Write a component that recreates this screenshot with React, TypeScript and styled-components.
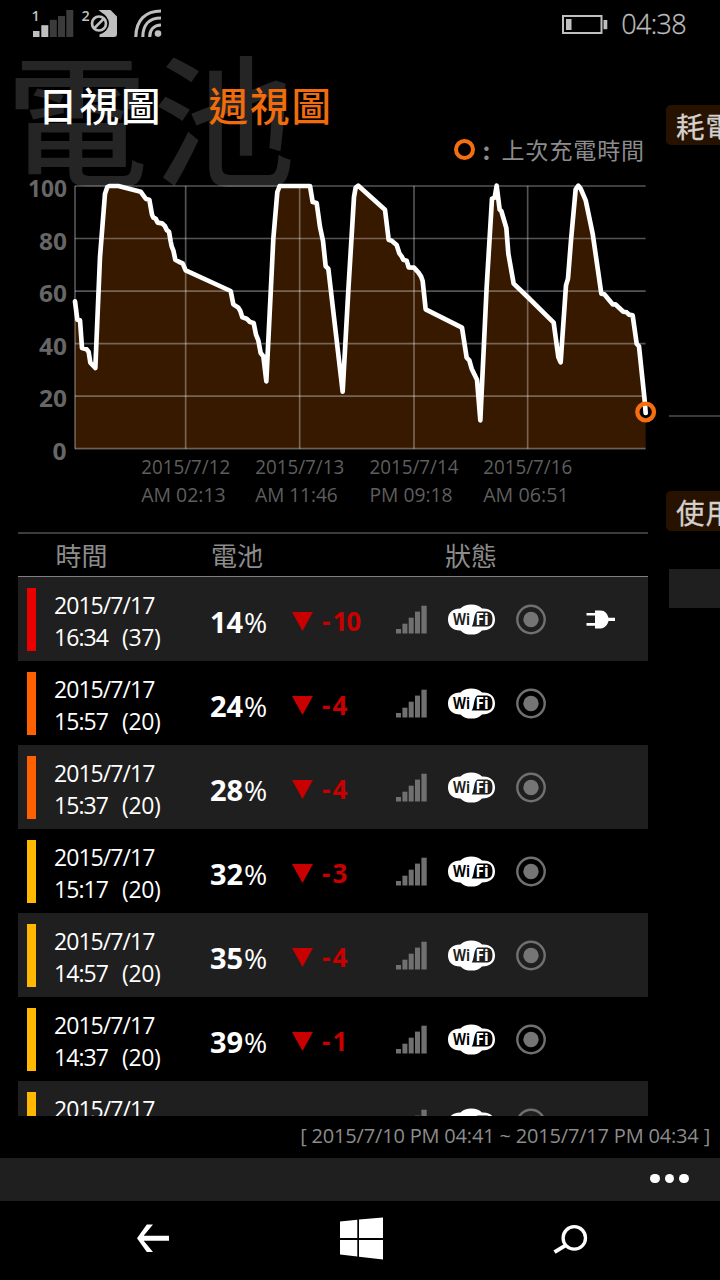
import React from "react";
import styled, { createGlobalStyle } from "styled-components";

const latin = `"Open Sans", "Noto Sans", "Noto Sans CJK TC", sans-serif`;
const cjk = `"Noto Sans CJK TC", "Open Sans", sans-serif`;

const GlobalStyle = createGlobalStyle`
  * { box-sizing: border-box; }
  html, body { margin: 0; background: #000; }
  body { font-family: ${latin}; color: #fff; overflow: hidden; }
  svg { display: block; flex: none; overflow: visible; }
`;

const Phone = styled.div`
  width: 720px;
  height: 1280px;
  display: flex;
  flex-direction: column;
  overflow: hidden;
  background: #000;
`;

const StatusBar = styled.header`
  height: 50px;
  flex: none;
  display: flex;
  align-items: flex-start;
  padding: 9px 34px 0 32px;
`;

const StatusRight = styled.div`
  margin-left: auto;
  display: flex;
  align-items: flex-start;
  gap: 12px;
`;

const Clock = styled.span`
  font-size: 27px;
  line-height: 30px;
  font-weight: 300;
  letter-spacing: -0.65px;
  color: #bfbfbf;
  -webkit-text-stroke: 0.3px #bfbfbf;
`;

const Panorama = styled.div`
  height: 1108px;
  flex: none;
  display: flex;
  position: relative;
  overflow: hidden;
`;

const Backdrop = styled.div`
  position: absolute;
  left: 6px;
  top: -18px;
  font-family: ${cjk};
  font-size: 142px;
  font-weight: 500;
  line-height: 164px;
  letter-spacing: 5px;
  white-space: nowrap;
  color: #252525;
`;

const MainPane = styled.main`
  position: relative;
  width: 648px;
  flex: none;
  display: flex;
  flex-direction: column;
  padding-left: 18px;
`;

const Tabs = styled.nav`
  height: 82px;
  flex: none;
  display: flex;
  gap: 46px;
  padding: 25px 0 0 20px;
`;

const Tab = styled.span<{ $active?: boolean }>`
  font-family: ${cjk};
  font-size: 39.5px;
  line-height: 57px;
  letter-spacing: 2px;
  font-weight: 500;
  color: ${(p) => (p.$active ? "#fff" : "#f06c0c")};
`;

const Legend = styled.div`
  height: 36px;
  flex: none;
  display: flex;
  align-items: center;
  justify-content: flex-end;
  padding: 0 3px 2px 0;
  font-family: ${cjk};
  font-size: 23px;
  letter-spacing: 0.9px;
  color: #8c8c8c;
`;

const LegendRing = styled.i`
  width: 21px;
  height: 21px;
  margin-top: 1px;
  border: 4.5px solid #f56e0f;
  border-radius: 50%;
`;

const Colon = styled.b`
  width: 26px;
  padding-left: 8px;
  margin-right: 1px;
  font-size: 24px;
`;

const HeaderRow = styled.div`
  height: 45px;
  margin-top: 14px;
  flex: none;
  display: grid;
  grid-template-columns: 155.5px 234px 1fr;
  align-items: center;
  padding-left: 37.5px;
  border-top: 2px solid #3c3c3c;
  border-bottom: 1px solid #808080;
  font-family: ${cjk};
  font-size: 26px;
  line-height: 40px;
  color: #8c8c8c;
`;

const List = styled.div`
  flex: 1;
  min-height: 0;
  overflow: hidden;
`;

const Row = styled.div<{ $shade: boolean }>`
  height: 84px;
  display: grid;
  grid-template-columns: 36px 156px 82px 104px 52px 68px 70px 1fr;
  align-items: center;
  background: ${(p) => (p.$shade ? "#1f1f1f" : "#000")};
`;

const LevelBar = styled.i<{ $color: string }>`
  width: 9px;
  height: 63px;
  margin-left: 9px;
  background: ${(p) => p.$color};
`;

const Stamp = styled.div`
  display: flex;
  flex-direction: column;
  font-size: 23px;
  line-height: 32px;
  letter-spacing: -0.95px;
  white-space: pre;
  padding-top: 4px;
`;

const StampTime = styled.div`
  display: flex;
  gap: 14px;
  span + span { letter-spacing: -0.3px; }
`;

const Percent = styled.div`
  padding-top: 6px;
  font-size: 27px;
  line-height: 32px;
  white-space: nowrap;
  b { font-weight: 700; font-size: 29px; letter-spacing: -0.2px; }
  span { display: inline-block; margin-left: 1px; transform: scaleX(1.04); transform-origin: left; }
`;

const Drop = styled.div`
  display: flex;
  align-items: center;
  padding-top: 4px;
  font-size: 26px;
  line-height: 32px;
  font-weight: 700;
  letter-spacing: -1px;
  color: #c80000;
  span { margin: 0 3px 0 9px; }
`;

const Period = styled.div`
  height: 42px;
  flex: none;
  width: 720px;
  margin-left: -18px;
  text-align: right;
  padding-right: 10px;
  font-size: 20px;
  line-height: 40px;
  letter-spacing: -0.18px;
  color: #8c8c8c;
  white-space: nowrap;
`;

const SidePane = styled.aside`
  position: relative;
  width: 54px;
  margin-left: 18px;
  flex: none;
  display: flex;
  flex-direction: column;
  padding-top: 55px;
`;

const SideTitle = styled.div`
  width: 160px;
  height: 40px;
  flex: none;
  padding-left: 10px;
  border-radius: 5px;
  background: #271200;
  font-family: ${cjk};
  font-size: 28.5px;
  letter-spacing: 1px;
  line-height: 41px;
  color: #d4d0cd;
  -webkit-text-stroke: 0.3px #d4d0cd;
`;

const SideRule = styled.div`
  height: 2px;
  margin: 270px 0 74px 3px;
  flex: none;
  background: #3a3a3a;
`;

const SideBlock = styled.div`
  height: 39px;
  margin: 38px 0 0 3px;
  flex: none;
  background: #1f1f1f;
`;

const AppBar = styled.div`
  height: 43px;
  flex: none;
  display: flex;
  align-items: center;
  justify-content: flex-end;
  gap: 5px;
  padding: 0 31px 2px 0;
  background: #1f1f1f;
  i { width: 9.7px; height: 9.7px; border-radius: 50%; background: #fff; }
`;

const NavBar = styled.footer`
  flex: 1;
  display: flex;
  justify-content: space-between;
  align-items: center;
  padding: 0 132px 4px 136px;
`;

const StatusIcons = () => (
  <svg width="132" height="30" viewBox="32 9 132 30" fill="#bfbfbf">
    <text x="31.500" y="21.300" fontSize="14.500" fontWeight="600" fontFamily="Open Sans">1</text>
    <rect x="33" y="31" width="6.500" height="6" />
    <rect x="41.300" y="25.200" width="7" height="11.800" />
    <g fill="#3b3b3b">
      <rect x="49.800" y="19.800" width="7" height="17.200" />
      <rect x="58" y="16" width="7" height="21" />
      <rect x="66.300" y="10" width="7" height="27" />
    </g>
    <text x="81.500" y="21.300" fontSize="14.500" fontWeight="600" fontFamily="Open Sans">2</text>
    <path d="M98.500 10H110.500L117 16.500V34Q117 37 114 37H99.500V34.500A12 12 0 0 0 101.500 12.500Z" />
    <circle cx="99" cy="23.500" r="10" fill="#000" />
    <circle cx="99" cy="23.500" r="7" fill="none" stroke="#bfbfbf" strokeWidth="2.700" />
    <path d="M94.500 28L103.500 19" stroke="#bfbfbf" strokeWidth="2.500" />
    <circle cx="158" cy="33.600" r="3.300" />
    <g fill="none" stroke="#bfbfbf" strokeWidth="3.100">
      <path d="M149.700 37C149.700 29.500 154 25.200 161 25" />
      <path d="M142.800 37C142.800 25 149 18 161 18" />
      <path d="M135.800 37C136 20 145.500 11 161 11" />
    </g>
  </svg>
);

const BatteryIcon = () => (
  <svg width="46" height="26" viewBox="0 0 46 26">
    <rect x="0" y="7" width="38.500" height="17" fill="none" stroke="#bfbfbf" strokeWidth="2" />
    <rect x="3" y="10" width="5.500" height="11" fill="#bfbfbf" />
    <rect x="40.500" y="11" width="3.800" height="9.200" fill="#bfbfbf" />
  </svg>
);

const TriangleIcon = () => (
  <svg width="21" height="19" viewBox="0 0 21 19"><path d="M0 0H21L10.500 19Z" fill="#c80000" /></svg>
);

const SignalIcon = () => (
  <svg width="31" height="30" viewBox="0 -1 31 30" fill="#707070">
    <rect x="0" y="24" width="5" height="4.500" />
    <rect x="6.400" y="18.700" width="5" height="9.800" />
    <rect x="12.700" y="12.700" width="5" height="15.800" />
    <rect x="19" y="6.600" width="5" height="21.900" />
    <rect x="25.400" y="0.700" width="5.300" height="27.800" />
  </svg>
);

const WifiIcon = ({ ink }: { ink: string }) => (
  <svg width="47" height="32" viewBox="0 -1 47 32">
    <path
      d="M12.500 4.600C17 -1 29.500 -1 34 4.600C42 4 47 8.500 47 15.500S42 26.400 34 26.400C29.500 32 17 32 12.500 26.400C5 26.600 0 22.500 0 15.500S5 4.400 12.500 4.600Z"
      fill="#fff"
    />
    <path d="M29.500 7.600H37.500C42.500 7.600 44.500 10 44.500 15.200S42.500 22.600 37.500 22.600H23.700C26.500 19.500 25.500 9 29.500 7.600Z" fill={ink} />
    <g fontFamily="Open Sans" fontWeight="700" fontSize="16.500">
      <text x="5" y="21.300" fill={ink} textLength="17" lengthAdjust="spacingAndGlyphs">Wi</text>
      <text x="27.600" y="21.300" fill="#fff" textLength="13" lengthAdjust="spacingAndGlyphs">Fi</text>
    </g>
  </svg>
);

const TargetIcon = () => (
  <svg width="30" height="32" viewBox="0 -1.500 30 32">
    <circle cx="15" cy="15" r="13.700" fill="none" stroke="#707070" strokeWidth="2.400" />
    <circle cx="15" cy="15" r="7.700" fill="#757575" />
  </svg>
);

const PlugIcon = () => (
  <svg width="29" height="20" viewBox="-0.500 -0.400 29 20" fill="#fff">
    <path d="M0 3.500H8.500V1H14C18.500 1 21 4.500 22 8.300H28.500V11.700H22C21 15.500 18.500 19 14 19H8.500V16.300H0V13.700H8.500V6H0Z" />
  </svg>
);

const BackIcon = () => (
  <svg width="34" height="28" viewBox="0 0.500 34 28">
    <path d="M10.800 0H17L7.700 11.300H33V16.300H7.700L17 27.500H10.800L1 13.800Z" fill="#fff" />
  </svg>
);

const WindowsIcon = () => (
  <svg width="43" height="42" viewBox="0 0 43 42" fill="#fff">
    <path d="M0 3.500L17.300 1.700V20H0ZM19 1.500L43 -0.500V20H19ZM0 22H17.300V38.500L0 36.500ZM19 22H43V41.500L19 38.800Z" />
  </svg>
);

const SearchIcon = () => (
  <svg width="35" height="28" viewBox="0 0.400 35 28" fill="none" stroke="#fff">
    <circle cx="21.300" cy="13.300" r="11.200" strokeWidth="3.300" />
    <path d="M13 20.500L1.500 27.500" strokeWidth="4" />
  </svg>
);

// Battery history in plot units: 1712 wide, 788 tall (0 = full charge).
const samples: [number, number][] = [
  [0, 346], [7, 401], [15, 403], [21, 486], [35, 490], [41, 498], [46, 530], [61, 546],
  [75, 213], [90, 23], [97, 3], [103, 0], [130, 0], [197, 17], [205, 28], [213, 39], [223, 41],
  [231, 86], [235, 95], [242, 98], [248, 110], [261, 112], [269, 119], [276, 133], [282, 137],
  [287, 166], [290, 181], [295, 193], [301, 221], [313, 228], [323, 232], [332, 253], [467, 315],
  [475, 355], [490, 365], [496, 375], [502, 394], [515, 398], [525, 408], [536, 411], [543, 446],
  [550, 463], [557, 501], [565, 511], [574, 586], [595, 158], [607, 18], [614, 0], [705, 0],
  [713, 48], [725, 51], [735, 123], [744, 165], [752, 241], [760, 248], [803, 617], [820, 313],
  [837, 33], [842, 5], [850, -1], [930, 71], [941, 161], [950, 164], [965, 177], [973, 202],
  [980, 211], [985, 221], [995, 224], [1001, 244], [1017, 245], [1030, 259], [1038, 271],
  [1043, 285], [1052, 370], [1161, 425], [1175, 515], [1183, 523], [1190, 548], [1206, 581],
  [1216, 703], [1235, 303], [1251, 38], [1259, 35], [1265, -1], [1274, 71], [1279, 75], [1294, 126],
  [1300, 203], [1316, 293], [1358, 333], [1436, 410], [1450, 513], [1457, 529], [1473, 298],
  [1479, 278], [1488, 163], [1502, 10], [1510, -1], [1517, 8], [1532, 43], [1553, 143], [1579, 323],
  [1588, 325], [1613, 355], [1621, 355], [1645, 377], [1655, 379], [1662, 386], [1673, 388],
  [1685, 473], [1692, 481], [1709, 643], [1712, 681],
];

const ticks = [
  { x: 332, date: "2015/7/12", time: "AM 02:13", w: 84 },
  { x: 674, date: "2015/7/13", time: "AM 11:46", w: 82 },
  { x: 1017, date: "2015/7/14", time: "PM 09:18", w: 82.5 },
  { x: 1358, date: "2015/7/16", time: "AM 06:51", w: 85 },
];

const Chart = () => {
  const line = samples.map((s) => s.join(",")).join(" ");
  return (
    <svg width="640" height="350" viewBox="18 168 640 350" fontFamily="Open Sans">
      <g transform="translate(75 186) scale(.33333)">
        <polygon points={`0,788 ${line} 1712,788`} fill="#371900" />
        <g stroke="#fff" strokeOpacity="0.330" strokeWidth="5">
          {[0, 1, 2, 3, 4, 5].map((i) => <path key={i} d={`M0 ${i * 157.6}H1712`} />)}
          <path d="M0 0V788" />
          {ticks.map((t) => <path key={t.x} d={`M${t.x} 0V788`} />)}
        </g>
        <circle cx="1712" cy="678" r="22" fill="#000" />
        <polyline points={line} fill="none" stroke="#fff" strokeWidth="14" strokeLinejoin="round" strokeLinecap="round" />
        <circle cx="1712" cy="678" r="25" fill="none" stroke="#f56e0f" strokeWidth="13" />
      </g>
      <g fill="#666" fontSize="23" fontWeight="700">
        {[100, 80, 60, 40, 20, 0].map((v, i) => (
          <text key={v} x={v === 100 ? 28 : v ? 39 : 52.5} y={197 + i * 52.5} textLength={v === 100 ? 39 : v ? 28 : 14} lengthAdjust="spacingAndGlyphs">{v}</text>
        ))}
      </g>
      <g fill="#5e5e5e" fontSize="20">
        {ticks.map((t) => (
          <React.Fragment key={t.x}>
            <text x={75 + t.x / 3 - 44.5} y="474" textLength="89" lengthAdjust="spacingAndGlyphs">{t.date}</text>
            <text x={75 + t.x / 3 - 44.5} y="502" textLength={t.w + 0.5} lengthAdjust="spacingAndGlyphs">{t.time}</text>
          </React.Fragment>
        ))}
      </g>
    </svg>
  );
};

const ChartArea = styled.div`
  height: 350px;
  margin: 0 -10px 0 0;
  flex: none;
`;

const rows = [
  { time: "16:34", mins: 37, level: 14, drop: 10, color: "#eb0000", plug: true },
  { time: "15:57", mins: 20, level: 24, drop: 4, color: "#ff6000" },
  { time: "15:37", mins: 20, level: 28, drop: 4, color: "#ff6000" },
  { time: "15:17", mins: 20, level: 32, drop: 3, color: "#ffb900" },
  { time: "14:57", mins: 20, level: 35, drop: 4, color: "#ffb900" },
  { time: "14:37", mins: 20, level: 39, drop: 1, color: "#ffb900" },
  { time: "14:17", mins: 20, level: 40, drop: 2, color: "#ffb900" },
];

export default function App() {
  return (
    <Phone>
      <GlobalStyle />
      <StatusBar>
        <StatusIcons />
        <StatusRight>
          <BatteryIcon />
          <Clock>04:38</Clock>
        </StatusRight>
      </StatusBar>
      <Panorama>
        <Backdrop>電池</Backdrop>
        <MainPane>
          <Tabs>
            <Tab $active>日視圖</Tab>
            <Tab>週視圖</Tab>
          </Tabs>
          <Legend><LegendRing /><Colon>:</Colon>上次充電時間</Legend>
          <ChartArea><Chart /></ChartArea>
          <HeaderRow><span>時間</span><span>電池</span><span>狀態</span></HeaderRow>
          <List>
            {rows.map((r, i) => (
              <Row key={r.time} $shade={i % 2 === 0}>
                <LevelBar $color={r.color} />
                <Stamp>
                  <span>2015/7/17</span>
                  <StampTime><span>{r.time}</span><span>({r.mins})</span></StampTime>
                </Stamp>
                <Percent><b>{r.level}</b><span>%</span></Percent>
                <Drop><TriangleIcon /><span>-</span>{r.drop}</Drop>
                <SignalIcon />
                <WifiIcon ink={i % 2 === 0 ? "#1f1f1f" : "#000"} />
                <TargetIcon />
                {r.plug && <PlugIcon />}
              </Row>
            ))}
          </List>
          <Period>[ 2015/7/10 PM 04:41 ~ 2015/7/17 PM 04:34 ]</Period>
        </MainPane>
        <SidePane>
          <SideTitle>耗電</SideTitle>
          <SideRule />
          <SideTitle>使用</SideTitle>
          <SideBlock />
        </SidePane>
      </Panorama>
      <AppBar><i /><i /><i /></AppBar>
      <NavBar>
        <BackIcon />
        <WindowsIcon />
        <SearchIcon />
      </NavBar>
    </Phone>
  );
}
